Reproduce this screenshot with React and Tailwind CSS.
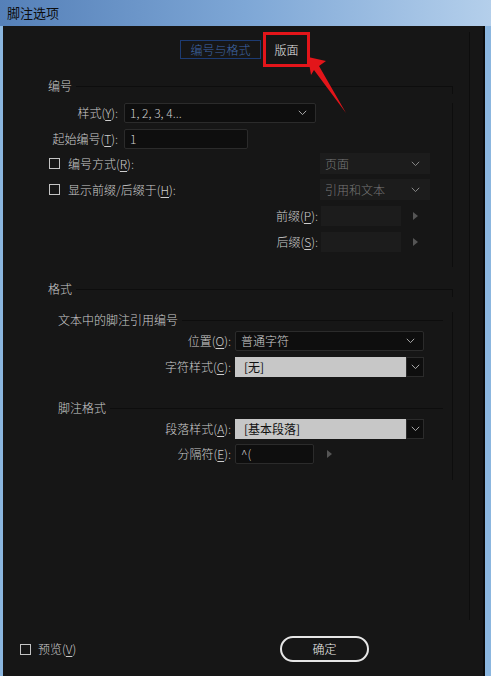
import React from "react";

const FONT = { fontFamily: '"Noto Sans CJK SC", "Noto Sans", sans-serif' };

// 带下划线助记键的标签，如 样式(Y):
function Mn({ text, k, colon = true }) {
  return (
    <span>
      {text}(<u className="underline-offset-2">{k}</u>){colon ? ":" : ""}
    </span>
  );
}

function Chevron({ color = "#a8a8a8" }) {
  return (
    <svg width="9" height="6" viewBox="0 0 9 6">
      <polyline points="0.8,0.8 4.5,4.6 8.2,0.8" fill="none" stroke={color} strokeWidth="1" />
    </svg>
  );
}

function Tri() {
  return (
    <svg width="5" height="8" viewBox="0 0 5 8">
      <polygon points="0,0 5,4 0,8" fill="#555" />
    </svg>
  );
}

function Check() {
  return <span className="block w-[11px] h-[11px] border border-[#c4c4c4] shrink-0" />;
}

function Select({ w, value }) {
  return (
    <div
      className="h-full flex items-center justify-between pl-[5px] pr-[8px] bg-[#0e0e0e] border border-[#2b2b2b] rounded-[2px] text-[#d0d0d0]"
      style={{ width: w }}
    >
      <span>{value}</span>
      <Chevron />
    </div>
  );
}

function GraySelect({ value }) {
  return (
    <div className="h-full flex">
      <div className="w-[171px] h-full bg-[#c7c7c7] text-[#111] font-normal pl-[9px] flex items-center">{value}</div>
      <div className="w-[18px] h-full bg-[#0e0e0e] border border-[#2b2b2b] flex items-center justify-center">
        <Chevron />
      </div>
    </div>
  );
}

function GroupHeader({ label, inset = false }) {
  return (
    <div className="flex h-[16px]">
      <span className="leading-[16px] pr-[4px]">{label}</span>
      <div
        className={
          inset
            ? "flex-1 mt-[8px] border-t border-[#0d0d0d]"
            : "flex-1 mt-[8px] border-t border-r border-[#0d0d0d]"
        }
      />
    </div>
  );
}

export default function App() {
  return (
    <div className="relative w-[491px] h-[676px] overflow-hidden bg-[#8bb6df] text-[12px] font-light" style={FONT}>
      {/* 标题栏 */}
      <div className="h-[26px] bg-gradient-to-r from-[#5580b8] via-[#7ea7d6] to-[#b4cfeb] pl-[7px] pt-[3px] text-[13px] leading-[20px] text-[#0d0d0d] font-normal">
        脚注选项
      </div>

      {/* 对话框主体 */}
      <div className="ml-[3px] w-[482px] h-[650px] bg-[#161616] border-r-2 border-[#0a0a0a] flex flex-col text-[#cdcdcd]">
        <div className="ml-[9px] mt-[6px] w-[458px] h-[588px] border-r border-[#0d0d0d]">
          {/* 选项卡 */}
          <div className="h-[35px] flex items-center pl-[168px]">
            <div className="w-[81px] h-[19px] border border-[#1d3b72] text-[#3f67a8] flex items-center justify-center">
              编号与格式
            </div>
            <div className="ml-[2px] w-[47px] h-[35px] border-[3px] border-[#e3151a] text-[#e6e6e6] flex items-center justify-center">
              版面
            </div>
          </div>

          {/* 编号 */}
          <div className="mt-[11px] ml-[36px] w-[405px]">
            <GroupHeader label="编号" />
            <div className="border-r border-[#0d0d0d] pb-[15px]">
              <div className="mt-[9px] h-[20px] flex items-center">
                <div className="w-[70px] text-right"><Mn text="样式" k="Y" /></div>
                <div className="ml-[6px] h-full"><Select w={192} value="1, 2, 3, 4..." /></div>
              </div>
              <div className="mt-[6px] h-[20px] flex items-center">
                <div className="w-[70px] text-right"><Mn text="起始编号" k="T" /></div>
                <div className="ml-[6px] w-[124px] h-full bg-[#0e0e0e] border border-[#2b2b2b] rounded-[2px] pl-[5px] flex items-center">
                  1
                </div>
              </div>
              <div className="mt-[4px] h-[21px] flex items-center">
                <div className="w-[272px] flex items-center pl-[1px]">
                  <Check />
                  <span className="ml-[8px]"><Mn text="编号方式" k="R" /></span>
                </div>
                <div className="w-[110px] h-full bg-[#1c1c1c] text-[#777] flex items-center justify-between pl-[5px] pr-[10px]">
                  <span>页面</span>
                  <Chevron color="#888" />
                </div>
              </div>
              <div className="mt-[5px] h-[21px] flex items-center">
                <div className="w-[272px] flex items-center pl-[1px]">
                  <Check />
                  <span className="ml-[8px]"><Mn text="显示前缀/后缀于" k="H" /></span>
                </div>
                <div className="w-[110px] h-full bg-[#1c1c1c] text-[#777] flex items-center justify-between pl-[5px] pr-[10px]">
                  <span>引用和文本</span>
                  <Chevron color="#888" />
                </div>
              </div>
              <div className="mt-[6px] h-[20px] flex items-center">
                <div className="w-[270px] text-right"><Mn text="前缀" k="P" /></div>
                <div className="ml-[3px] w-[80px] h-full bg-[#1c1c1c]" />
                <div className="ml-[12px]"><Tri /></div>
              </div>
              <div className="mt-[6px] h-[20px] flex items-center">
                <div className="w-[270px] text-right"><Mn text="后缀" k="S" /></div>
                <div className="ml-[3px] w-[80px] h-full bg-[#1c1c1c]" />
                <div className="ml-[12px]"><Tri /></div>
              </div>
            </div>
          </div>

          {/* 格式 */}
          <div className="mt-[14px] ml-[36px] w-[405px]">
            <GroupHeader label="格式" />
            <div className="border-r border-[#0d0d0d] pb-[16px]">
              <div className="mt-[15px] ml-[10px] w-[385px]">
                <GroupHeader label="文本中的脚注引用编号" inset />
              </div>
              <div className="mt-[3px] h-[20px] flex items-center">
                <div className="w-[183px] text-right"><Mn text="位置" k="O" /></div>
                <div className="ml-[4px] h-full"><Select w={189} value="普通字符" /></div>
              </div>
              <div className="mt-[6px] h-[20px] flex items-center">
                <div className="w-[183px] text-right"><Mn text="字符样式" k="C" /></div>
                <div className="ml-[4px] h-full"><GraySelect value="[无]" /></div>
              </div>
              <div className="mt-[23px] ml-[10px] w-[385px]">
                <GroupHeader label="脚注格式" inset />
              </div>
              <div className="mt-[3px] h-[20px] flex items-center">
                <div className="w-[183px] text-right"><Mn text="段落样式" k="A" /></div>
                <div className="ml-[4px] h-full"><GraySelect value="[基本段落]" /></div>
              </div>
              <div className="mt-[5px] h-[20px] flex items-center">
                <div className="w-[183px] text-right"><Mn text="分隔符" k="E" /></div>
                <div className="ml-[4px] w-[79px] h-full bg-[#0e0e0e] border border-[#2b2b2b] rounded-[2px] pl-[5px] flex items-center">
                  ^(
                </div>
                <div className="ml-[13px]"><Tri /></div>
              </div>
            </div>
          </div>
        </div>

        {/* 底部按钮 */}
        <div className="mt-[16px] h-[26px] flex items-center">
          <div className="w-[277px] flex items-center pl-[17px]">
            <Check />
            <span className="ml-[7px]"><Mn text="预览" k="V" colon={false} /></span>
          </div>
          <div className="w-[89px] h-[26px] rounded-full border-2 border-[#e6e6e6] text-[#ececec] flex items-center justify-center">
            确定
          </div>
        </div>
      </div>

      {/* 红色标注箭头 */}
      <svg className="absolute left-0 top-0 pointer-events-none" width="491" height="676">
        <polygon points="308,57 326,61 319,66 346,113 314,70 311,75" fill="#e3151a" />
      </svg>
    </div>
  );
}
